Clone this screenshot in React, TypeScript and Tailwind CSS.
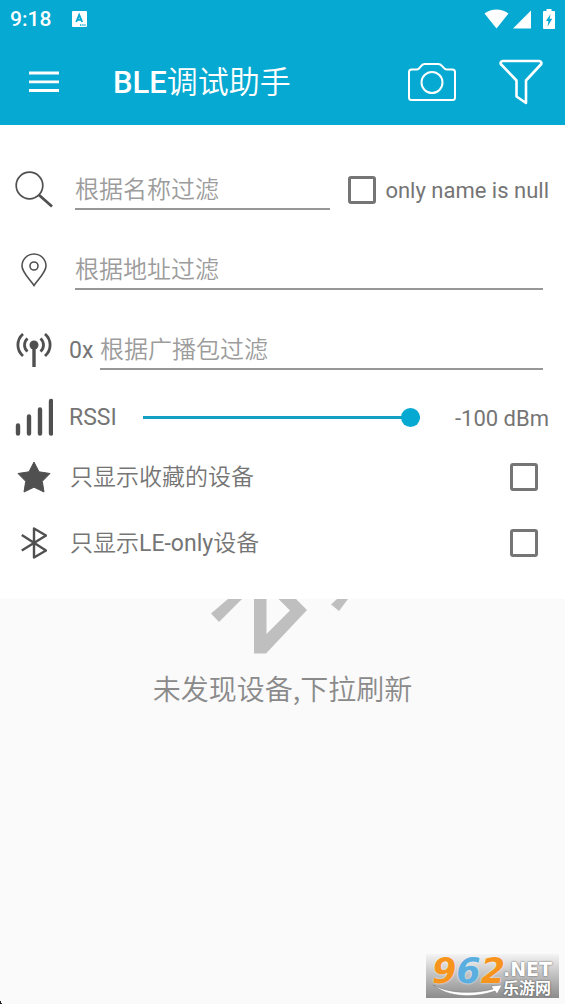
import { useState } from 'react';
import type { ReactNode } from 'react';

function StatusBar() {
  return (
    <div className="flex h-[38px] items-center justify-between pl-[10px] pr-[9px]">
      <div className="flex items-center gap-[21px]">
        <span className="text-[21px] font-medium leading-6">9:18</span>
        <svg width="15" height="16" viewBox="0 0 15 16">
          <rect width="15" height="16" rx="1" fill="#fff" />
          <path d="M4.2 11 7.2 4 10.2 11M5.2 8.8H9.2" fill="none" stroke="#05a9d1" strokeWidth="1.9" />
          <path d="M8 14H9.3M10.3 14H11.6M12.4 14H13.6" stroke="#05a9d1" strokeWidth="1.3" />
        </svg>
      </div>
      <svg width="72" height="20" viewBox="0 0 72 20" fill="#fff">
        <path d="M0.5 4.6C7.5-.8 17.5-.8 24.5 4.6L12.5 19.4Z" />
        <path d="M47 1.5V19.5H29Z" />
        <path d="M62.5 0H67.5V2H70.2Q71 2 71 2.8V19.2Q71 20 70.2 20H59.8Q59 20 59 19.2V2.8Q59 2 59.8 2H62.5Z" />
        <path d="M66.5 5 62 12H64.4L63.6 17.5 68.2 9.8H65.6Z" fill="#05a9d1" />
      </svg>
    </div>
  );
}

function AppBar() {
  return (
    <div className="flex h-[87px] items-center pl-[29px] pr-[22px]">
      <button aria-label="menu">
        <svg width="30" height="22" viewBox="0 0 30 22" stroke="#fff" strokeWidth="2.8">
          <path d="M0 2H30M0 10.8H30M0 19.5H30" />
        </svg>
      </button>
      <h1 className="ml-[54px] flex-1 pt-[2px] text-[31px] leading-10">
        <span className="font-medium">BLE</span>
        <span className="font-[350]">调试助手</span>
      </h1>
      <button aria-label="camera">
        <svg width="48" height="40" viewBox="0 0 48 40" fill="none" stroke="#fff" strokeWidth="2">
          <path d="M3.5 7.5H9C12 7.5 12.5 2 16.5 2H30.5C34.5 2 35.5 7.5 38.5 7.5H44.5Q47 7.5 47 10V35.5Q47 38 44.5 38H3.5Q1 38 1 35.5V10Q1 7.5 3.5 7.5Z" />
          <circle cx="24" cy="20.5" r="10.5" />
        </svg>
      </button>
      <button aria-label="filter" className="ml-[43px]">
        <svg width="44" height="46" viewBox="0 0 44 46" fill="none" stroke="#fff" strokeWidth="2.6" strokeLinejoin="round">
          <path d="M4 2H40Q43 2.4 42.3 5L27 21.5V44L17.5 37.5V21.5L1.7 5Q1 2.4 4 2Z" />
        </svg>
      </button>
    </div>
  );
}

const SearchIcon = () => (
  <svg width="38" height="38" viewBox="0 0 38 38" fill="none" stroke="#505050">
    <circle cx="14.5" cy="14.5" r="13.3" strokeWidth="1.7" />
    <path d="M24 24 37 35.5" strokeWidth="2.8" />
  </svg>
);

const PinIcon = () => (
  <svg width="26" height="34" viewBox="0 0 26 34" fill="none" stroke="#505050" strokeWidth="1.6">
    <path d="M13 32.5C9.5 27 1 19.5 1 13A12 12 0 0 1 25 13C25 19.5 16.5 27 13 32.5Z" />
    <circle cx="13" cy="13" r="4" />
  </svg>
);

const AntennaIcon = () => (
  <svg width="36" height="34" viewBox="0 0 36 34" fill="none" stroke="#505050" strokeWidth="2.8">
    <circle cx="18" cy="12" r="4.5" fill="#505050" stroke="none" />
    <path d="M18 12V34" strokeWidth="3.4" />
    <path d="M11.5 5.5C7.5 9 7.5 15 11.5 18.5M24.5 5.5C28.5 9 28.5 15 24.5 18.5" />
    <path d="M7 1C.2 7 .2 17 7 23M29 1C35.8 7 35.8 17 29 23" />
  </svg>
);

const SignalIcon = () => (
  <svg width="38" height="38" viewBox="0 0 38 38" stroke="#505050" strokeWidth="4.4" strokeLinecap="round">
    <path d="M3 27.5V35.5M14 18.5V35.5M25 11.5V35.5M36 3V35.5" />
  </svg>
);

const StarIcon = () => (
  <svg width="34" height="32" viewBox="0 0 34 32" fill="#505050" stroke="#505050" strokeLinejoin="round">
    <path d="M17 1 22 10.8 33 12.5 25.3 20.3 27 31 17 26.2 7 31 8.7 20.3 1 12.5 12 10.8Z" />
  </svg>
);

const BluetoothIcon = () => (
  <svg width="26" height="32" viewBox="0 0 26 32" fill="none" stroke="#505050" strokeWidth="2.4" strokeLinejoin="round">
    <path d="M.8 8 25 23.5 13 30.5V1.5L25 8.5 .8 23.5" />
  </svg>
);

function Row({ icon, height, children }: { icon: ReactNode; height: string; children: ReactNode }) {
  return (
    <div className={`flex items-center pl-[15px] pr-4 ${height}`}>
      <div className="mr-4 flex w-[38px] shrink-0 justify-center">{icon}</div>
      {children}
    </div>
  );
}

const fieldCls =
  'h-10 w-0 min-w-0 flex-1 border-b-2 border-[#979797] bg-transparent pt-[2px] text-[24px] font-[350] outline-none placeholder:text-[#9c9c9c]';
const boxCls =
  'size-7 shrink-0 appearance-none rounded-[3px] border-3 border-[#757575] bg-white checked:bg-[#05a9d1]';

function FilterPanel() {
  const [rssi, setRssi] = useState(100);

  return (
    <section className="bg-white pb-[23px] pt-[25px] text-[#757575]">
      <Row icon={<SearchIcon />} height="h-20">
        <input className={`${fieldCls} ml-[6px]`} aria-label="根据名称过滤" placeholder="根据名称过滤" />
        <label className="ml-[18px] flex items-center gap-[9px] text-[22px]">
          <input type="checkbox" className={boxCls} />
          only name is null
        </label>
      </Row>
      <Row icon={<PinIcon />} height="h-20">
        <input className={`${fieldCls} ml-[6px] mr-[6px]`} aria-label="根据地址过滤" placeholder="根据地址过滤" />
      </Row>
      <Row icon={<AntennaIcon />} height="h-20">
        <label htmlFor="adv" className="w-[31px] pt-[2px]">0x</label>
        <input id="adv" className={`${fieldCls} mr-[6px]`} placeholder="根据广播包过滤" />
      </Row>
      <Row icon={<SignalIcon />} height="h-[54px]">
        <label htmlFor="rssi" className="w-[74px] pt-[2px]">RSSI</label>
        <input
          id="rssi"
          type="range"
          min={0}
          max={100}
          value={rssi}
          onChange={e => setRssi(Number(e.target.value))}
          className="h-5 w-0 flex-1 appearance-none bg-transparent [&::-webkit-slider-runnable-track]:h-[3px] [&::-webkit-slider-runnable-track]:bg-[#139fc4] [&::-webkit-slider-thumb]:-mt-2 [&::-webkit-slider-thumb]:size-[19px] [&::-webkit-slider-thumb]:appearance-none [&::-webkit-slider-thumb]:rounded-full [&::-webkit-slider-thumb]:bg-[#05a9d1]"
        />
        <output htmlFor="rssi" className="w-[129px] pt-[2px] text-right text-[22px]">-{rssi} dBm</output>
      </Row>
      <Row icon={<StarIcon />} height="h-[66px]">
        <label htmlFor="fav" className="flex-1 pl-px pt-[2px] font-[350]">只显示收藏的设备</label>
        <input id="fav" type="checkbox" className={`${boxCls} mr-[11px]`} />
      </Row>
      <Row icon={<BluetoothIcon />} height="h-[66px]">
        <label htmlFor="le" className="flex-1 pl-px pt-[2px] font-[350]">
          只显示<span className="font-normal">LE-only</span>设备
        </label>
        <input id="le" type="checkbox" className={`${boxCls} mr-[11px]`} />
      </Row>
    </section>
  );
}

function EmptyState() {
  return (
    <section className="flex flex-col items-center">
      {/* lower part of the scan icon, the rest is under the filter panel */}
      <svg width="144" height="55" viewBox="0 0 144 55" fill="#bfbfbf">
        <path d="M17 0H31L8 23 0 14.5Z" />
        <path fillRule="evenodd" d="M43 0H85L96 11 55 54.5H43ZM55.5 0V35L79 11.5 67.5 0Z" />
        <path d="M126 0H137L128 12 120 5.5Z" />
      </svg>
      <p className="pt-[14px] font-['Noto_Sans_CJK_SC',sans-serif] text-[28px] font-[350] leading-10 text-[#8a8a8a]">
        未发现设备,下拉刷新
      </p>
    </section>
  );
}

function SiteMark() {
  return (
    <div className="absolute bottom-[6px] right-[6px] h-11 w-[133px] bg-linear-to-b from-[#f4f4f4] to-[#8c8c8c]">
      <span className="absolute -top-1 left-[6px] font-['DejaVu_Sans'] text-[35px] font-bold italic leading-[42px] text-[#f7941d] [text-shadow:0_0_2px_#fff]">
        9<span className="text-[#5aaee0]">6</span>2
      </span>
      <div className="absolute left-[77px] top-[5px] flex flex-col text-white [text-shadow:0_0_2px_#444]">
        <span className="font-['DejaVu_Sans'] text-[19px] font-bold leading-5">.NET</span>
        <span className="text-[16px] font-bold leading-5">乐游网</span>
      </div>
      <svg className="absolute left-[7px] top-[31px]" width="70" height="12" viewBox="0 0 70 12" fill="#fff" stroke="#777" strokeWidth=".5">
        <path d="M0 0C16 9 42 9 60 4L58 1 69 0 64 9 62 6C42 13 16 13 0 0Z" />
      </svg>
    </div>
  );
}

export default function App() {
  return (
    <div className="relative min-h-screen bg-[#fafafa] font-[Roboto,'Noto_Sans_CJK_SC',sans-serif] text-[23px]">
      <header className="bg-[#05a9d1] text-white">
        <StatusBar />
        <AppBar />
      </header>
      <main>
        <FilterPanel />
        <EmptyState />
      </main>
      <SiteMark />
      <svg className="absolute bottom-0 left-0" width="2" height="3" viewBox="0 0 2 3">
        <path d="M0 0H1V2H2V3H0Z" fill="#222" />
      </svg>
    </div>
  );
}
